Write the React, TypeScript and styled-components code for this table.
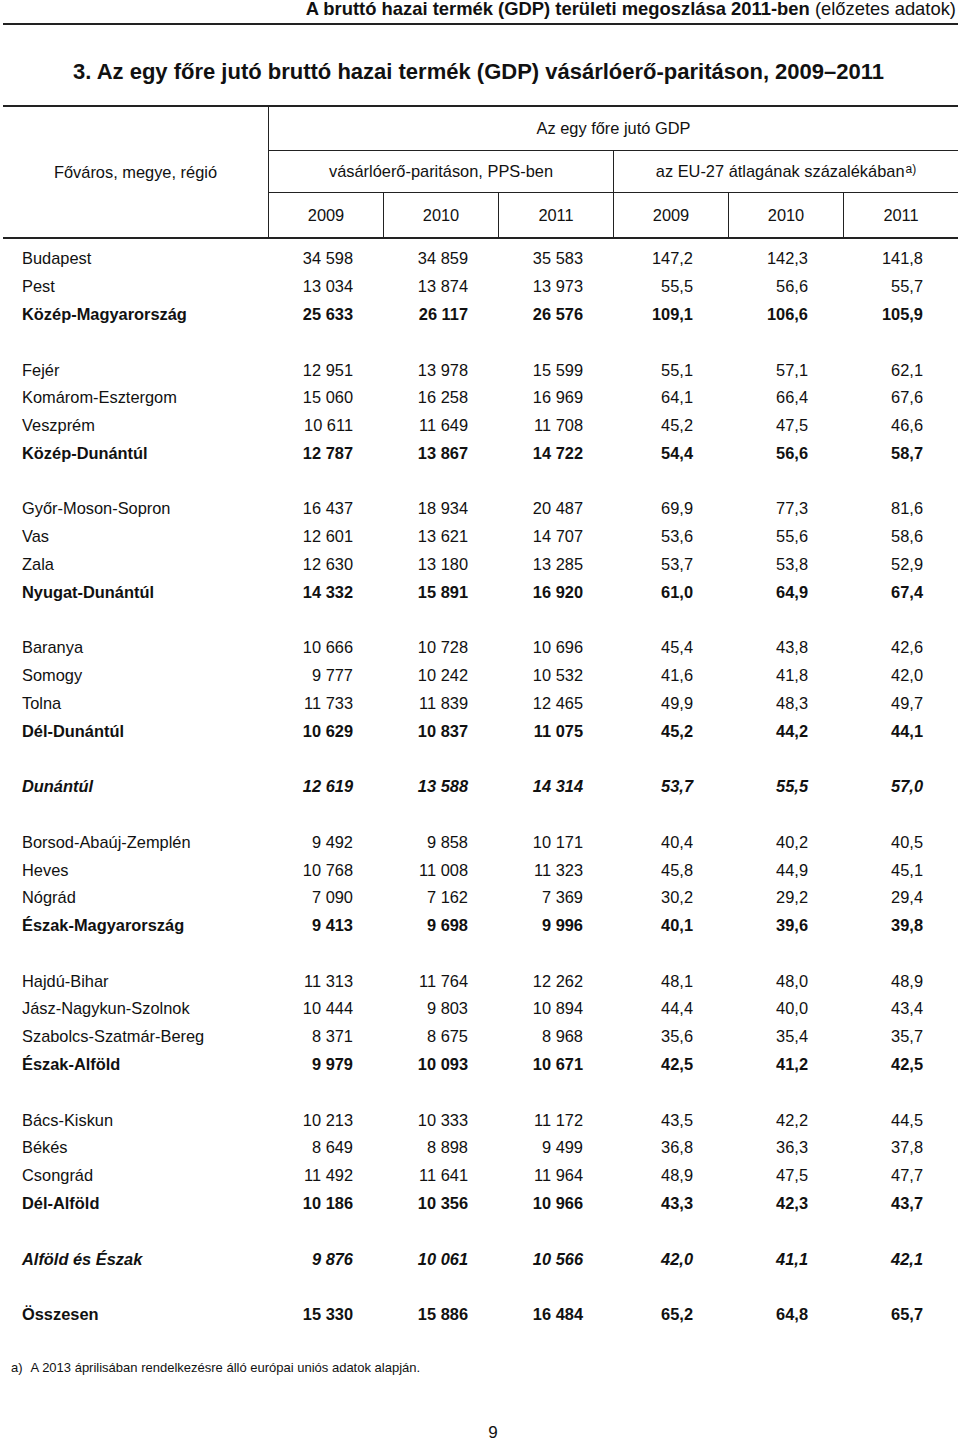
import React from "react";
import styled, { createGlobalStyle, css } from "styled-components";

const GlobalStyle = createGlobalStyle`
  html, body { margin: 0; padding: 0; background: #fff; }
  body {
    font-family: "Liberation Sans", Arial, sans-serif;
    color: #111;
    width: 960px;
  }
`;

const COLS = "265px repeat(6, 115px)";
const ROW_H = 27.79;

const Page = styled.div`
  width: 960px;
  height: 1442px;
  display: flex;
  flex-direction: column;
`;

const RunningHead = styled.div`
  margin: 0 2px 0 3px;
  height: 25px;
  border-bottom: 2px solid #222;
  box-sizing: border-box;
  padding-right: 2px;
  text-align: right;
  font-size: 18.4px;
  line-height: 18px;
  white-space: nowrap;
  b { font-weight: bold; }
`;

const Title = styled.h1`
  margin: 34px 0 0 0;
  padding-left: 73px;
  font-size: 22px;
  line-height: 26px;
  font-weight: bold;
`;

const Table = styled.section`
  margin: 20px 2px 0 3px;
  width: 955px;
`;

const HeadGrid = styled.div`
  display: grid;
  grid-template-columns: ${COLS};
  grid-template-rows: 44px 42px 44px;
  border-top: 2px solid #222;
  border-bottom: 2px solid #222;
  font-size: 16.4px;
`;

const HeadCell = styled.div<{ $col: string; $row: string; $left?: boolean; $bottom?: boolean }>`
  grid-column: ${(p) => p.$col};
  grid-row: ${(p) => p.$row};
  display: flex;
  align-items: center;
  justify-content: center;
  box-sizing: border-box;
  white-space: nowrap;
  ${(p) => p.$left && css`border-left: 1.5px solid #222;`}
  ${(p) => p.$bottom && css`border-bottom: 1.5px solid #222;`}
  sup {
    font-size: 12px;
    line-height: 0;
    position: relative;
    top: -3px;
    margin-left: 1px;
  }
`;

const Body = styled.div`
  padding-top: 6px;
  display: flex;
  flex-direction: column;
`;

type Variant = "normal" | "bold" | "italic";

const Row = styled.div<{ $variant: Variant }>`
  display: grid;
  grid-template-columns: ${COLS};
  height: ${ROW_H}px;
  align-items: center;
  font-size: 16.4px;
  font-weight: ${(p) => (p.$variant === "normal" ? "normal" : "bold")};
  font-style: ${(p) => (p.$variant === "italic" ? "italic" : "normal")};
`;

const Spacer = styled.div`
  height: ${ROW_H}px;
`;

const Label = styled.div`
  padding-left: 19px;
  white-space: nowrap;
`;

const Num = styled.div<{ $pct?: boolean }>`
  text-align: right;
  padding-right: ${(p) => (p.$pct ? 35 : 30)}px;
  white-space: nowrap;
`;

const Footnote = styled.div`
  margin-top: 32px;
  padding-left: 11px;
  display: flex;
  gap: 8px;
  font-size: 13px;
  line-height: 16px;
`;

const PageNumber = styled.div`
  margin-top: auto;
  height: 18px;
  text-align: center;
  padding-left: 26px;
  font-size: 17px;
  line-height: 18px;
`;

type DataRow = [string, Variant, string[]] | null;

const rows: DataRow[] = [
  ["Budapest", "normal", ["34 598", "34 859", "35 583", "147,2", "142,3", "141,8"]],
  ["Pest", "normal", ["13 034", "13 874", "13 973", "55,5", "56,6", "55,7"]],
  ["Közép-Magyarország", "bold", ["25 633", "26 117", "26 576", "109,1", "106,6", "105,9"]],
  null,
  ["Fejér", "normal", ["12 951", "13 978", "15 599", "55,1", "57,1", "62,1"]],
  ["Komárom-Esztergom", "normal", ["15 060", "16 258", "16 969", "64,1", "66,4", "67,6"]],
  ["Veszprém", "normal", ["10 611", "11 649", "11 708", "45,2", "47,5", "46,6"]],
  ["Közép-Dunántúl", "bold", ["12 787", "13 867", "14 722", "54,4", "56,6", "58,7"]],
  null,
  ["Győr-Moson-Sopron", "normal", ["16 437", "18 934", "20 487", "69,9", "77,3", "81,6"]],
  ["Vas", "normal", ["12 601", "13 621", "14 707", "53,6", "55,6", "58,6"]],
  ["Zala", "normal", ["12 630", "13 180", "13 285", "53,7", "53,8", "52,9"]],
  ["Nyugat-Dunántúl", "bold", ["14 332", "15 891", "16 920", "61,0", "64,9", "67,4"]],
  null,
  ["Baranya", "normal", ["10 666", "10 728", "10 696", "45,4", "43,8", "42,6"]],
  ["Somogy", "normal", ["9 777", "10 242", "10 532", "41,6", "41,8", "42,0"]],
  ["Tolna", "normal", ["11 733", "11 839", "12 465", "49,9", "48,3", "49,7"]],
  ["Dél-Dunántúl", "bold", ["10 629", "10 837", "11 075", "45,2", "44,2", "44,1"]],
  null,
  ["Dunántúl", "italic", ["12 619", "13 588", "14 314", "53,7", "55,5", "57,0"]],
  null,
  ["Borsod-Abaúj-Zemplén", "normal", ["9 492", "9 858", "10 171", "40,4", "40,2", "40,5"]],
  ["Heves", "normal", ["10 768", "11 008", "11 323", "45,8", "44,9", "45,1"]],
  ["Nógrád", "normal", ["7 090", "7 162", "7 369", "30,2", "29,2", "29,4"]],
  ["Észak-Magyarország", "bold", ["9 413", "9 698", "9 996", "40,1", "39,6", "39,8"]],
  null,
  ["Hajdú-Bihar", "normal", ["11 313", "11 764", "12 262", "48,1", "48,0", "48,9"]],
  ["Jász-Nagykun-Szolnok", "normal", ["10 444", "9 803", "10 894", "44,4", "40,0", "43,4"]],
  ["Szabolcs-Szatmár-Bereg", "normal", ["8 371", "8 675", "8 968", "35,6", "35,4", "35,7"]],
  ["Észak-Alföld", "bold", ["9 979", "10 093", "10 671", "42,5", "41,2", "42,5"]],
  null,
  ["Bács-Kiskun", "normal", ["10 213", "10 333", "11 172", "43,5", "42,2", "44,5"]],
  ["Békés", "normal", ["8 649", "8 898", "9 499", "36,8", "36,3", "37,8"]],
  ["Csongrád", "normal", ["11 492", "11 641", "11 964", "48,9", "47,5", "47,7"]],
  ["Dél-Alföld", "bold", ["10 186", "10 356", "10 966", "43,3", "42,3", "43,7"]],
  null,
  ["Alföld és Észak", "italic", ["9 876", "10 061", "10 566", "42,0", "41,1", "42,1"]],
  null,
  ["Összesen", "bold", ["15 330", "15 886", "16 484", "65,2", "64,8", "65,7"]],
];

const years = ["2009", "2010", "2011", "2009", "2010", "2011"];

export default function App() {
  return (
    <Page>
      <GlobalStyle />
      <RunningHead>
        <b>A bruttó hazai termék (GDP) területi megoszlása 2011-ben</b> (előzetes adatok)
      </RunningHead>
      <Title>3. Az egy főre jutó bruttó hazai termék (GDP) vásárlóerő-paritáson, 2009–2011</Title>
      <Table>
        <HeadGrid>
          <HeadCell $col="1" $row="1 / 4">Főváros, megye, régió</HeadCell>
          <HeadCell $col="2 / 8" $row="1" $left $bottom>
            Az egy főre jutó GDP
          </HeadCell>
          <HeadCell $col="2 / 5" $row="2" $left $bottom>
            vásárlóerő-paritáson, PPS-ben
          </HeadCell>
          <HeadCell $col="5 / 8" $row="2" $left $bottom>
            az EU-27 átlagának százalékában<sup>a)</sup>
          </HeadCell>
          {years.map((y, i) => (
            <HeadCell key={i} $col={`${i + 2}`} $row="3" $left>
              {y}
            </HeadCell>
          ))}
        </HeadGrid>
        <Body>
          {rows.map((r, i) =>
            r === null ? (
              <Spacer key={i} />
            ) : (
              <Row key={i} $variant={r[1]}>
                <Label>{r[0]}</Label>
                {r[2].map((v, j) => (
                  <Num key={j} $pct={j >= 3}>
                    {v}
                  </Num>
                ))}
              </Row>
            )
          )}
        </Body>
      </Table>
      <Footnote>
        <span>a)</span>
        <span>A 2013 áprilisában rendelkezésre álló európai uniós adatok alapján.</span>
      </Footnote>
      <PageNumber>9</PageNumber>
    </Page>
  );
}
